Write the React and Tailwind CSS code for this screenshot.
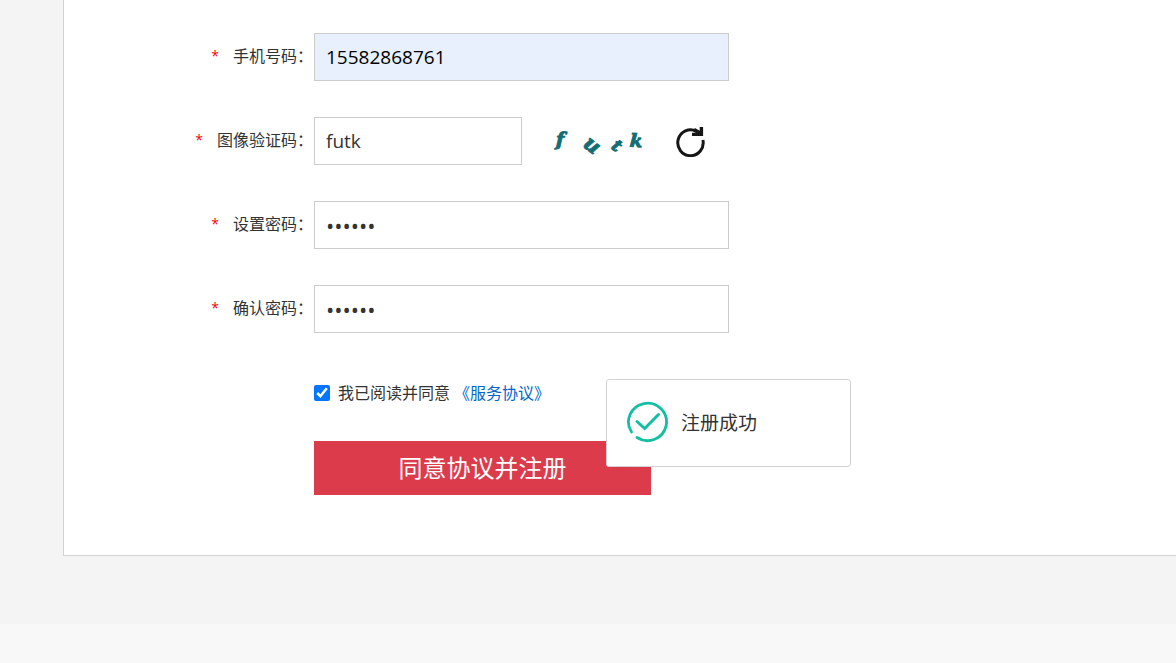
import { useState } from "react"

const inputClass =
  "h-12 border border-[#ccc] px-[11px] outline-none"

function Field({ id, label, children }) {
  return (
    <div className="flex items-center">
      <label
        htmlFor={id}
        className="flex w-[250px] shrink-0 items-center justify-end gap-3.5 pr-px pb-0.5 text-base"
      >
        <span className="text-sm text-[#f00]">*</span>
        <span>{label}</span>
      </label>
      {children}
    </div>
  )
}

function Captcha() {
  return (
    <svg
      className="ml-7 h-10 w-28"
      viewBox="0 0 112 40"
      fill="#146c74"
      stroke="#146c74"
      strokeWidth="1"
      fontFamily="'DejaVu Serif', serif"
      fontWeight="bold"
      fontStyle="italic"
      fontSize="20"
      role="img"
      aria-label="futk"
    >
      <text x="6" y="25" transform="rotate(2 10 18)" fontSize="19">f</text>
      <text x="34" y="31" transform="rotate(38 42 25)" fontSize="21">u</text>
      <text x="63" y="31" transform="rotate(38 68 25)" fontSize="17">t</text>
      <text x="80" y="26" transform="rotate(4 88 20)" fontSize="18">k</text>
    </svg>
  )
}

function RefreshIcon() {
  return (
    <svg className="h-8 w-8" viewBox="0 0 32 32" fill="none" stroke="#161616">
      <path d="M28.9 15 A12.7 12.9 0 1 1 22.5 6.4" strokeWidth="3" />
      <path d="M27.4 2 V9.4 H18" strokeWidth="3.4" />
      <path d="M20 4.6 L28 9" strokeWidth="3.6" />
    </svg>
  )
}

function SuccessIcon() {
  return (
    <svg
      className="h-11 w-11"
      viewBox="0 0 44 44"
      fill="none"
      stroke="#12bfa2"
      strokeWidth="2.8"
      strokeLinecap="round"
    >
      <path d="M6.5 31 A19 18.7 0 1 1 12 36.5" />
      <path d="M12 20.5 L19.7 27.5 L33.5 13.5" strokeWidth="3" />
    </svg>
  )
}

function Toast() {
  return (
    <div
      role="status"
      className="absolute top-2.5 left-[292px] flex h-[88px] w-[245px] items-center gap-3 rounded-[3px] border border-[#d2d2d2] bg-white px-[18px] text-[19px]"
    >
      <SuccessIcon />
      <span>注册成功</span>
    </div>
  )
}

export default function App() {
  const [phone, setPhone] = useState("15582868761")
  const [code, setCode] = useState("futk")
  const [password, setPassword] = useState("123456")
  const [confirm, setConfirm] = useState("123456")
  const [agreed, setAgreed] = useState(true)

  return (
    <div className="flex min-h-screen flex-col bg-[#f8f8f8] font-['Open_Sans','Noto_Sans_CJK_SC',sans-serif] text-[#333]">
      <main className="bg-[#f4f4f4] pb-[68px] pl-[63px]">
        <form
          className="flex flex-col gap-9 border-b border-l border-[#d2d2d2] bg-white pt-[33px] pb-[60px]"
          onSubmit={(e) => e.preventDefault()}
        >
          <Field id="phone" label="手机号码：">
            <input
              id="phone"
              type="tel"
              className={`${inputClass} w-[415px] bg-[#e8f0fe] text-[19px] text-black`}
              value={phone}
              onChange={(e) => setPhone(e.target.value)}
            />
          </Field>

          <Field id="code" label="图像验证码：">
            <input
              id="code"
              type="text"
              className={`${inputClass} w-52 bg-white text-[19px]`}
              value={code}
              onChange={(e) => setCode(e.target.value)}
            />
            <Captcha />
            <button type="button" aria-label="刷新" className="ml-3">
              <RefreshIcon />
            </button>
          </Field>

          <Field id="password" label="设置密码：">
            <input
              id="password"
              type="password"
              className={`${inputClass} w-[415px] bg-white text-[22px]`}
              value={password}
              onChange={(e) => setPassword(e.target.value)}
            />
          </Field>

          <Field id="confirm" label="确认密码：">
            <input
              id="confirm"
              type="password"
              className={`${inputClass} w-[415px] bg-white text-[22px]`}
              value={confirm}
              onChange={(e) => setConfirm(e.target.value)}
            />
          </Field>

          <div className="relative ml-[250px] flex flex-col items-start gap-[38px] pt-3.5">
            <div className="flex items-center text-base leading-5">
              <input
                id="agree"
                type="checkbox"
                className="mr-2 h-4 w-4"
                checked={agreed}
                onChange={(e) => setAgreed(e.target.checked)}
              />
              <label htmlFor="agree">我已阅读并同意</label>
              <a href="#agreement" className="ml-1 text-[#0066cc]">《服务协议》</a>
            </div>
            <button
              type="submit"
              className="h-[54px] w-[337px] bg-[#dc3b4c] text-2xl text-white"
            >
              同意协议并注册
            </button>
            <Toast />
          </div>
        </form>
      </main>
    </div>
  )
}
